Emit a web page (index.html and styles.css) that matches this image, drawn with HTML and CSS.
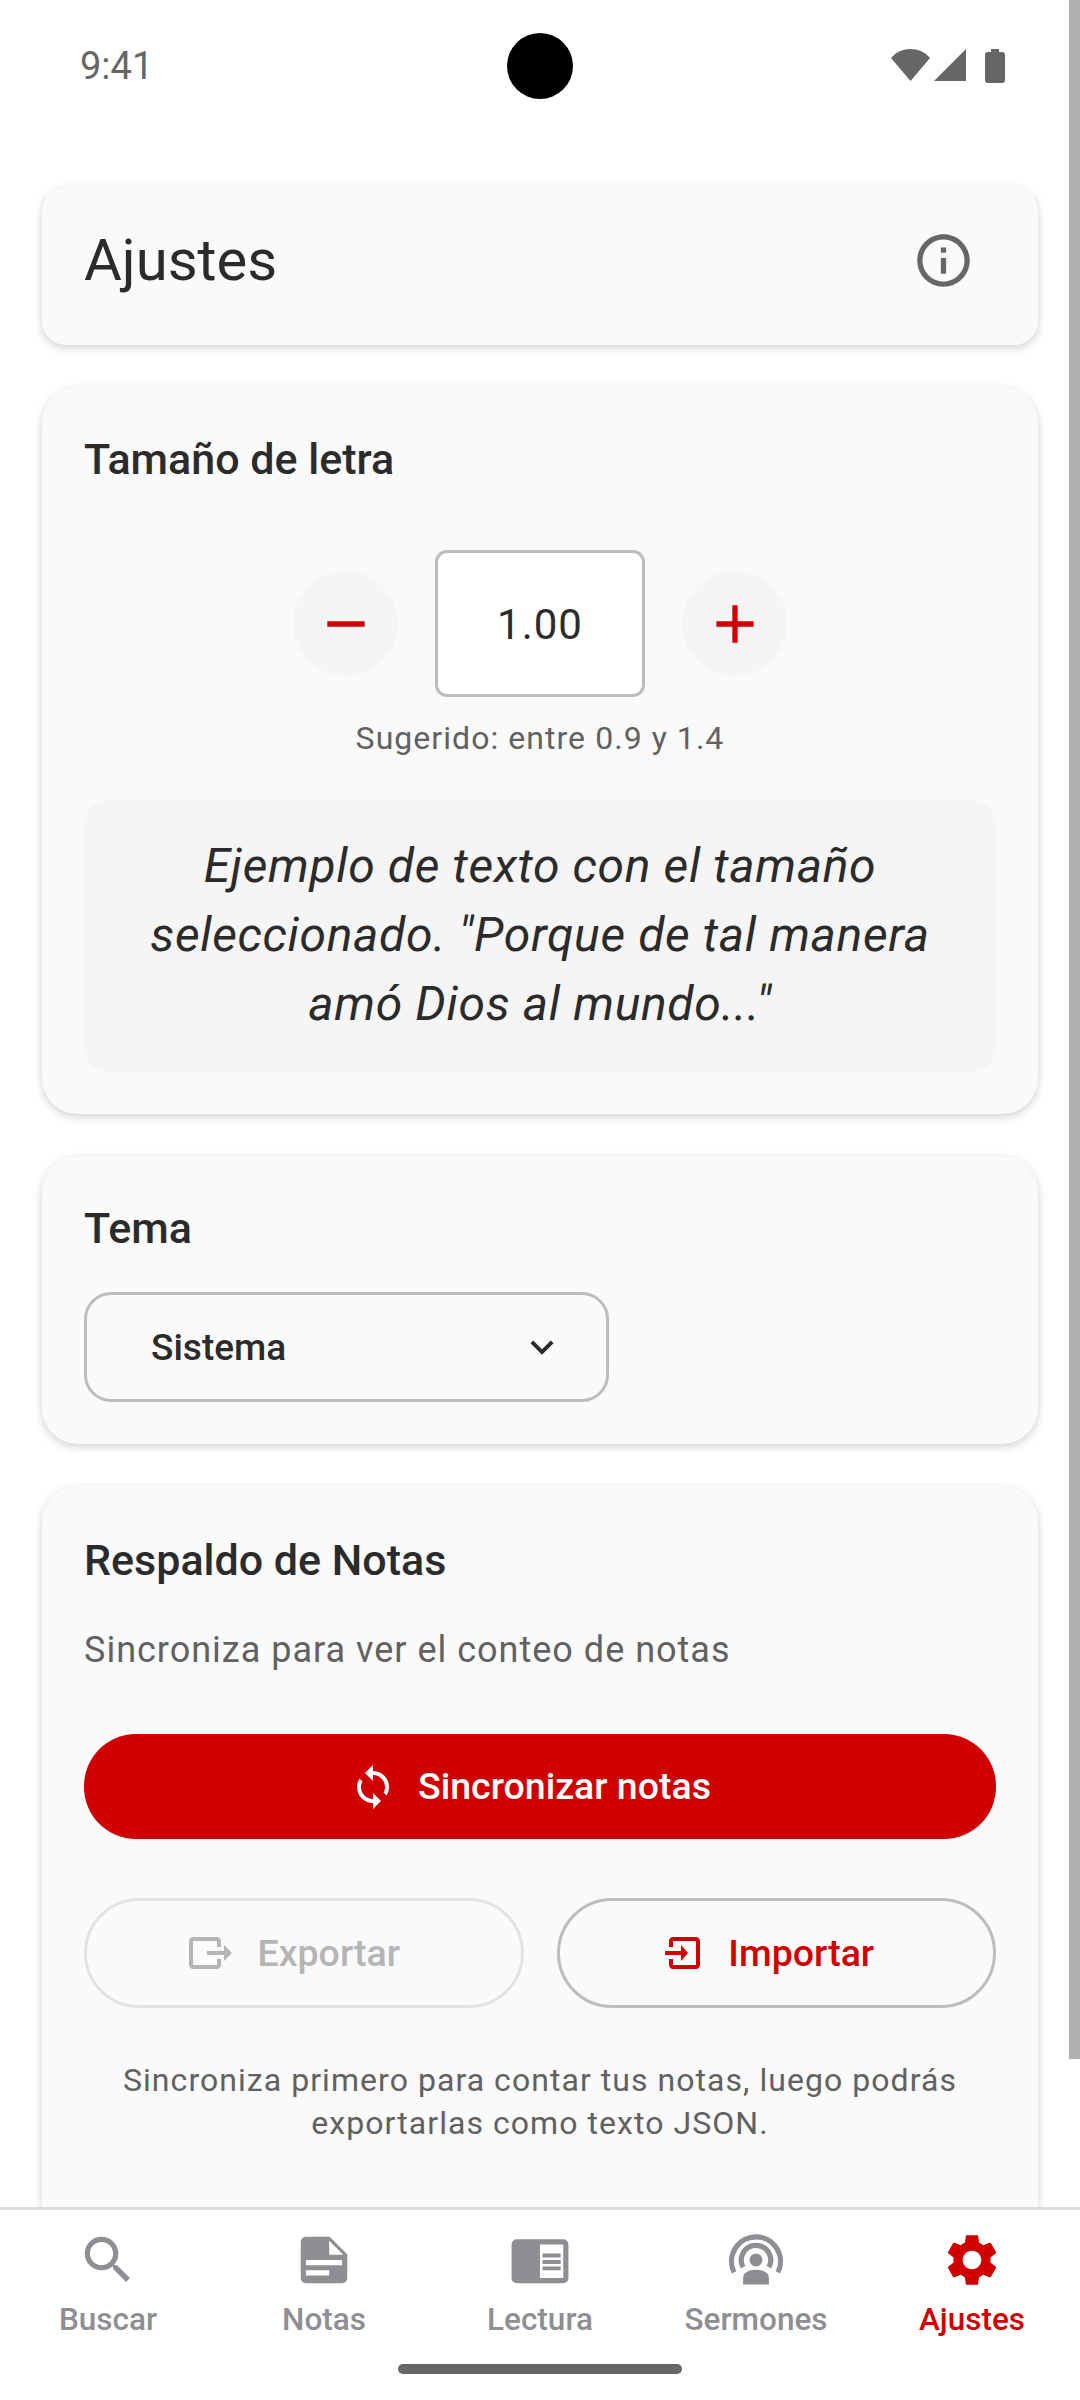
FILE: index.html
```html
<!DOCTYPE html>
<html lang="es">
<head>
  <meta charset="UTF-8" />
  <meta name="viewport" content="width=device-width, initial-scale=1" />
  <title>Ajustes</title>
  <link rel="stylesheet" href="styles.css">
</head>
<body>
  <div class="screen">
    <div class="status-bar">
      <span class="clock">9:41</span>
      <div class="status-icons">
        <svg class="wifi" width="39" height="32" viewBox="0 0 39 32"><path d="M0 9C5 3 12 0 19.500 0S34 3 39 9L19.500 32z"/></svg>
        <svg class="signal" width="32" height="32" viewBox="0 0 32 32"><path d="M32 0v32H0z"/></svg>
        <svg class="battery" width="20" height="34" viewBox="0 0 20 34"><path d="M6 0h8v3h3q3 0 3 3v25q0 3-3 3H3q-3 0-3-3V6q0-3 3-3h3z"/></svg>
      </div>
    </div>

    <main class="content">
      <section class="card title-card">
        <h1>Ajustes</h1>
        <svg class="info" viewBox="0 0 24 24"><path d="M11 7h2v2h-2zm0 4h2v6h-2zm1-9C6.480 2 2 6.480 2 12s4.480 10 10 10 10-4.480 10-10S17.520 2 12 2zm0 18c-4.410 0-8-3.590-8-8s3.590-8 8-8 8 3.590 8 8-3.590 8-8 8z"/></svg>
      </section>

      <section class="card size-card">
        <h2>Tamaño de letra</h2>
        <div class="stepper">
          <button class="round-btn" type="button"><svg viewBox="0 0 24 24"><path d="M19 13H5v-2h14z"/></svg></button>
          <div class="size-value">1.00</div>
          <button class="round-btn" type="button"><svg viewBox="0 0 24 24"><path d="M19 13h-6v6h-2v-6H5v-2h6V5h2v6h6z"/></svg></button>
        </div>
        <p class="hint">Sugerido: entre 0.9 y 1.4</p>
        <div class="preview">Ejemplo de texto con el tamaño seleccionado. "Porque de tal manera amó Dios al mundo..."</div>
      </section>

      <section class="card theme-card">
        <h2>Tema</h2>
        <div class="select">
          <span>Sistema</span>
          <svg viewBox="0 0 24 24"><path d="M16.590 8.590L12 13.170 7.410 8.590 6 10l6 6 6-6z"/></svg>
        </div>
      </section>

      <section class="card backup-card">
        <h2>Respaldo de Notas</h2>
        <p class="count">Sincroniza para ver el conteo de notas</p>
        <button class="sync-btn" type="button">
          <svg viewBox="0 0 24 24"><path d="M12 4V1L8 5l4 4V6c3.310 0 6 2.690 6 6 0 1.010-.25 1.970-.7 2.800l1.460 1.460C19.540 15.030 20 13.570 20 12c0-4.420-3.580-8-8-8zm0 14c-3.310 0-6-2.690-6-6 0-1.010.25-1.970.7-2.800L5.240 7.740C4.460 8.970 4 10.430 4 12c0 4.420 3.580 8 8 8v3l4-4-4-4v3z"/></svg>
          <span>Sincronizar notas</span>
        </button>
        <div class="backup-row">
          <button class="outline-btn disabled" type="button">
            <svg viewBox="0 0 24 24"><path d="M3 4h12c1.100 0 2 .9 2 2v3h-2V6H3v12h12v-3h2v3c0 1.100-.9 2-2 2H3c-1.100 0-2-.9-2-2V6c0-1.100.9-2 2-2zM10 11h8.500V8l4 4-4 4v-3H10z"/></svg>
            Exportar
          </button>
          <button class="outline-btn" type="button">
            <svg viewBox="0 0 24 24"><path d="M7.500 4H19c1.100 0 2 .9 2 2v12c0 1.100-.9 2-2 2H7.500c-1.100 0-2-.9-2-2v-3h2v3H19V6H7.500v3h-2V6c0-1.100.9-2 2-2zM3.500 11h8V8l3.500 4-3.500 4v-3h-8z"/></svg>
            Importar
          </button>
        </div>
        <p class="backup-note">Sincroniza primero para contar tus notas, luego podrás exportarlas como texto JSON.</p>
      </section>
    </main>

    <nav class="tabbar">
      <div class="tab">
        <svg viewBox="0 0 24 24"><path d="M15.500 14h-.79l-.28-.27C15.410 12.590 16 11.110 16 9.500 16 5.910 13.090 3 9.500 3S3 5.910 3 9.500 5.910 16 9.500 16c1.610 0 3.090-.59 4.230-1.570l.27.28v.79l5 4.990L20.490 19l-4.990-5zm-6 0C7.010 14 5 11.990 5 9.500S7.010 5 9.500 5 14 7.010 14 9.500 11.990 14 9.500 14z"/></svg>
        <span>Buscar</span>
      </div>
      <div class="tab">
        <svg viewBox="0 0 24 24"><path fill-rule="evenodd" d="M14.200 3H5c-1.100 0-2 .9-2 2v14c0 1.100.9 2 2 2h14c1.100 0 2-.9 2-2V9.800zM14 4.500L19.500 10H14zM5 12h14v2H5zM5 16h9v2H5z"/></svg>
        <span>Notas</span>
      </div>
      <div class="tab">
        <svg viewBox="0 0 24 24"><path d="M13 12h7v1.500h-7zm0-2.500h7V11h-7zm0 5h7V16h-7zM21 4H3c-1.100 0-2 .9-2 2v13c0 1.100.9 2 2 2h18c1.100 0 2-.9 2-2V6c0-1.100-.9-2-2-2zm0 15h-9V6h9v13z"/></svg>
        <span>Lectura</span>
      </div>
      <div class="tab">
        <svg viewBox="0 0 24 24">
          <path class="ring" d="M3.500 16.800A9.500 9.500 0 1 1 20.500 16.800"/>
          <path class="ring" d="M7 14.800A5.700 5.700 0 1 1 17 14.800"/>
          <circle cx="12" cy="12" r="2.500"/>
          <path d="M7 21.500V19c0-2 2-3.200 5-3.200s5 1.200 5 3.200v2.500z"/>
        </svg>
        <span>Sermones</span>
      </div>
      <div class="tab active">
        <svg viewBox="0 0 24 24"><path d="M19.140 12.940c.04-.3.060-.61.060-.94 0-.32-.02-.64-.07-.94l2.030-1.580c.18-.14.230-.41.120-.61l-1.920-3.320c-.12-.22-.37-.29-.59-.22l-2.390.96c-.5-.38-1.030-.7-1.620-.94l-.36-2.540c-.04-.24-.24-.41-.48-.41h-3.840c-.24 0-.43.170-.47.41l-.36 2.540c-.59.240-1.130.570-1.620.94l-2.390-.96c-.22-.08-.47 0-.59.220L2.740 8.870c-.12.210-.08.470.12.610l2.030 1.580c-.05.300-.09.630-.09.940s.02.640.07.940l-2.030 1.580c-.18.140-.23.410-.12.610l1.920 3.320c.12.220.37.290.59.220l2.390-.96c.5.380 1.030.7 1.620.94l.36 2.540c.05.240.24.410.48.410h3.840c.24 0 .44-.17.47-.41l.36-2.540c.59-.24 1.130-.56 1.620-.94l2.390.96c.22.080.47 0 .59-.22l1.920-3.320c.12-.22.070-.47-.12-.61l-2.010-1.580zM12 15.600c-1.980 0-3.600-1.620-3.600-3.600s1.620-3.600 3.600-3.600 3.600 1.620 3.600 3.600-1.620 3.600-3.600 3.600z"/></svg>
        <span>Ajustes</span>
      </div>
      <div class="home-bar"></div>
    </nav>

    <div class="camera"></div>
    <div class="scrollbar"></div>
  </div>
</body>
</html>
```

FILE: styles.css
```css
* {
  box-sizing: border-box;
}
body {
  margin: 0;
  font-family: Roboto, 'Noto Sans', sans-serif;
  background: #fff;
  color: #2b2b2b;
}
h1, h2, p {
  margin: 0;
}
button {
  font-family: inherit;
  padding: 0;
  border: none;
  background: none;
}
.screen {
  position: relative;
  width: 1080px;
  height: 2400px;
  overflow: hidden;
  display: flex;
  flex-direction: column;
  background: #fff;
}
.status-bar {
  height: 130px;
  flex: none;
  display: flex;
  justify-content: space-between;
  align-items: center;
  padding: 2px 75px 0 80px;
  color: #666;
}
.clock {
  font-size: 38px;
  font-weight: 400;
}
.status-icons {
  display: flex;
  align-items: flex-start;
}
.status-icons svg {
  fill: #666;
}
.signal {
  margin-left: 4px;
}
.battery {
  margin-left: 19px;
}
.camera {
  position: absolute;
  left: 507px;
  top: 33px;
  width: 66px;
  height: 66px;
  border-radius: 50%;
  background: #000;
}
.scrollbar {
  position: absolute;
  right: 0;
  top: 0;
  width: 11px;
  height: 2059px;
  background: #b0b0b0;
}
.content {
  flex: 1;
  min-height: 0;
  overflow: hidden;
  padding: 57px 42px 0;
  display: flex;
  flex-direction: column;
  gap: 42px;
}
.card {
  flex: none;
  background: #fafafa;
  border-radius: 36px;
  padding: 42px;
  box-shadow: 0 3px 10px rgba(0,0,0,0.18);
}
.title-card {
  height: 158px;
  border-radius: 24px;
  display: flex;
  justify-content: space-between;
  align-items: center;
  padding: 0 63px 12px 42px;
}
.title-card h1 {
  font-size: 58px;
  font-weight: 400;
}
.info {
  width: 63px;
  height: 63px;
  fill: #666;
}
h2 {
  font-size: 43px;
  font-weight: 500;
  line-height: 60px;
}
.stepper {
  margin-top: 61px;
  display: flex;
  justify-content: center;
  align-items: center;
  gap: 37px;
}
.round-btn {
  width: 105px;
  height: 105px;
  border-radius: 50%;
  background: #f5f5f5;
  display: flex;
  align-items: center;
  justify-content: center;
}
.round-btn svg {
  width: 64px;
  height: 64px;
  fill: #d10000;
}
.size-value {
  width: 210px;
  height: 147px;
  padding-top: 2px;
  background: #fff;
  border: 3px solid #bdbdbd;
  border-radius: 12px;
  display: flex;
  align-items: center;
  justify-content: center;
  font-size: 42px;
  letter-spacing: 1px;
}
.hint {
  margin-top: 22px;
  text-align: center;
  font-size: 32px;
  line-height: 38px;
  letter-spacing: 1.05px;
  color: #616161;
}
.preview {
  margin-top: 43px;
  padding: 31px 42px 34px;
  background: #f5f5f5;
  border-radius: 24px;
  text-align: center;
  font-size: 48px;
  font-style: italic;
  line-height: 69px;
  letter-spacing: 0.65px;
}
.select {
  margin-top: 34px;
  width: 525px;
  height: 110px;
  border: 3px solid #bdbdbd;
  border-radius: 27px;
  display: flex;
  align-items: center;
  justify-content: space-between;
  padding: 0 41px 0 64px;
  font-size: 37px;
  font-weight: 500;
}
.select svg {
  width: 46px;
  height: 46px;
  fill: #2b2b2b;
}
.backup-card {
  padding-top: 44px;
}
.count {
  margin-top: 39px;
  font-size: 36px;
  line-height: 42px;
  letter-spacing: 1px;
  color: #616161;
}
.sync-btn {
  margin-top: 63px;
  width: 100%;
  height: 105px;
  padding-right: 20px;
  border-radius: 52px;
  background: #d10000;
  color: #fff;
  font-size: 37.5px;
  font-weight: 500;
  display: flex;
  align-items: center;
  justify-content: center;
  gap: 21px;
}
.sync-btn span {
  margin-top: -2px;
}
.sync-btn svg {
  width: 48px;
  height: 48px;
  fill: #fff;
}
.backup-row {
  margin-top: 59px;
  display: flex;
  gap: 33px;
}
.outline-btn {
  flex: 1;
  height: 110px;
  padding-right: 20px;
  border: 3px solid #bdbdbd;
  border-radius: 55px;
  color: #d10000;
  font-size: 37.5px;
  font-weight: 500;
  display: flex;
  align-items: center;
  justify-content: center;
  gap: 22px;
}
.outline-btn svg {
  width: 48px;
  height: 48px;
  fill: currentColor;
}
.outline-btn.disabled {
  border-color: #e3e3e3;
  color: #b5b5b5;
}
.backup-note {
  margin-top: 51px;
  margin-bottom: 80px;
  text-align: center;
  font-size: 32px;
  line-height: 43px;
  letter-spacing: 1.05px;
  color: #616161;
}
.tabbar {
  position: relative;
  flex: none;
  height: 193px;
  padding-top: 19px;
  background: #fff;
  border-top: 3px solid #dcdcdc;
  display: flex;
}
.tab {
  flex: 1;
  display: flex;
  flex-direction: column;
  align-items: center;
  gap: 10px;
  font-size: 31.5px;
  font-weight: 500;
  color: #8e8e93;
}
.tab svg {
  width: 62px;
  height: 62px;
  fill: currentColor;
}
.tab .ring {
  fill: none;
  stroke: currentColor;
  stroke-width: 2;
}
.tab.active {
  color: #d10000;
}
.home-bar {
  position: absolute;
  left: 398px;
  bottom: 26px;
  width: 284px;
  height: 10px;
  border-radius: 5px;
  background: #666;
}
```
